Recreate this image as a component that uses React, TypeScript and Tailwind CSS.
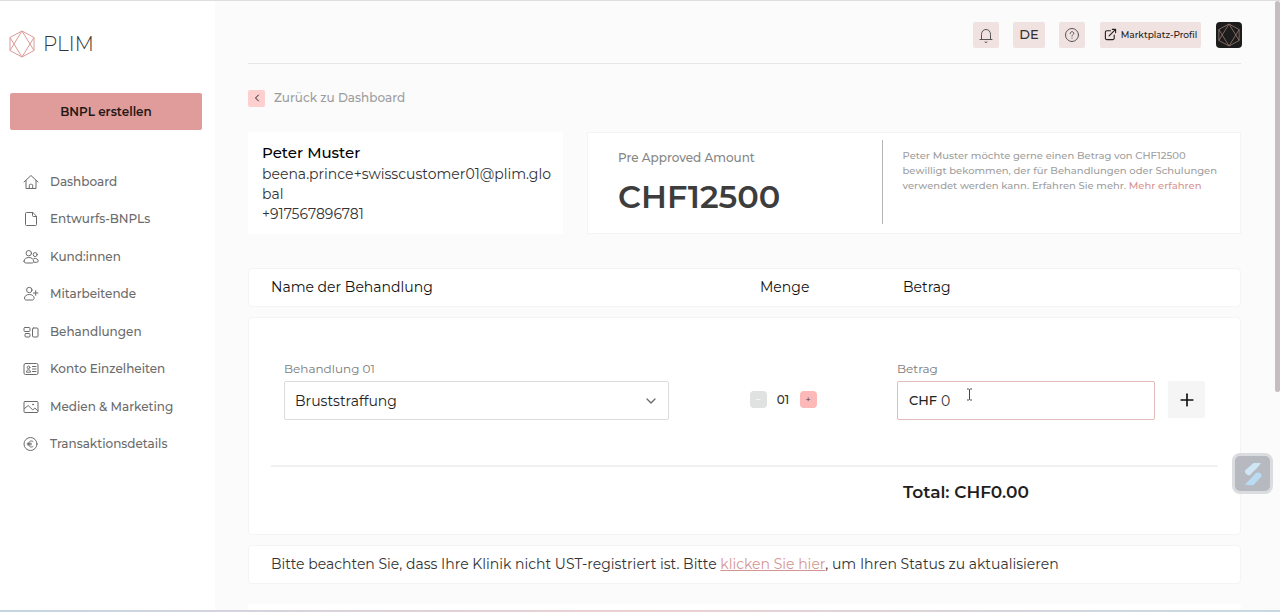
import { useState } from 'react';
import type { ReactNode } from 'react';
import { ChevronDown, ChevronLeft, Plus } from 'lucide-react';

const navItems: { label: string; icon: ReactNode }[] = [
  {
    label: 'Dashboard',
    icon: (
      <>
        <path d="M1 8 8 1.5 15 8" />
        <path d="M3 6.5v8h10v-8" />
        <path d="M6.3 14.5v-3.2c0-.6.4-1 1-1h1.4c.6 0 1 .4 1 1v3.2" />
      </>
    )
  },
  {
    label: 'Entwurfs-BNPLs',
    icon: (
      <>
        <path d="M9.5 1.5h-6a1 1 0 0 0-1 1v11a1 1 0 0 0 1 1h9a1 1 0 0 0 1-1v-8z" />
        <path d="M9.5 1.5v3a1 1 0 0 0 1 1h3" />
      </>
    )
  },
  {
    label: 'Kund:innen',
    icon: (
      <>
        <circle cx="5.8" cy="4.2" r="2.7" />
        <path d="M1 12.3c0-2.4 2-3.8 4.8-3.8s4.8 1.4 4.8 3.8c0 1-.7 1.7-1.7 1.7H2.7C1.7 14 1 13.3 1 12.3z" />
        <circle cx="12.2" cy="5.6" r="2" />
        <path d="M11 9.4c2.5-.2 4.2.9 4.2 2.5 0 .8-.6 1.4-1.4 1.4h-2.6" />
      </>
    )
  },
  {
    label: 'Mitarbeitende',
    icon: (
      <>
        <circle cx="6.3" cy="4" r="2.7" />
        <path d="M1.5 12.3c0-2.4 2-3.8 4.8-3.8s4.8 1.4 4.8 3.8c0 1-.7 1.7-1.7 1.7H3.2c-1 0-1.7-.7-1.7-1.7z" />
        <path d="M12.7 4.7v4.6M10.4 7H15" />
      </>
    )
  },
  {
    label: 'Behandlungen',
    icon: (
      <>
        <rect x="1" y="3.5" width="6" height="4" rx="1" />
        <rect x="2" y="9.5" width="5" height="3.5" rx="1" />
        <rect x="9.5" y="4" width="5.5" height="9" rx="1" />
      </>
    )
  },
  {
    label: 'Konto Einzelheiten',
    icon: (
      <>
        <rect x="1" y="2.5" width="14" height="11" rx="1.5" />
        <circle cx="5.5" cy="6.4" r="1.3" />
        <path d="M3.5 10.8c0-1.3.8-2 2-2s2 .7 2 2z" />
        <path d="M9.5 5.5H13M9.5 8H13M9.5 10.5H13" />
      </>
    )
  },
  {
    label: 'Medien & Marketing',
    icon: (
      <>
        <rect x="1" y="2.5" width="14" height="11" rx="1" />
        <path d="m1.5 9.5 3.7-3 4.6 4.5 2-2 3 2.7" />
        <circle cx="10" cy="5.5" r=".5" />
      </>
    )
  },
  {
    label: 'Transaktionsdetails',
    icon: (
      <>
        <circle cx="7.5" cy="8" r="6.5" />
        <path d="M10 5.5C8 4 5.7 5.3 5.7 8s2.3 4 4.3 2.5M4.3 7.3h4M4.3 8.8h4" />
      </>
    )
  }
];

function Hexagon({ className }: { className: string }) {
  return (
    <svg viewBox="0 0 26 28" fill="none" stroke="currentColor" strokeLinejoin="round" className={className} aria-hidden="true">
      <path d="M13 1 25 7.5v13L13 27 1 20.5v-13z" />
      <path d="M13 1 1 20.5M13 1l12 19.5M13 27 1 7.5M13 27 25 7.5" />
    </svg>
  );
}

function Sidebar() {
  return (
    <aside className="w-[215px] shrink-0 bg-white">
      <a href="#" className="flex items-center gap-2 pl-[9px] mt-[29px]">
        <Hexagon className="w-[26px] h-[28px] text-[#dc9a98]" />
        <span className="text-xl font-light leading-7 text-[#333]">PLIM</span>
      </a>
      <div className="pl-[10px] pr-[13px] mt-[35px]">
        <button className="w-full h-[37px] rounded-xs bg-[#e09c9b] text-xs font-semibold text-[#231815]">
          BNPL erstellen
        </button>
      </div>
      <nav className="grid auto-rows-fr h-75 mt-[33px]">
        {navItems.map((item) => (
          <a key={item.label} href="#" className="flex items-center gap-[11px] pl-[23px] text-xs font-medium text-[#6b6b6b]">
            <svg viewBox="0 0 16 16" fill="none" stroke="currentColor" strokeLinecap="round" strokeLinejoin="round" className="size-4" aria-hidden="true">
              {item.icon}
            </svg>
            {item.label}
          </a>
        ))}
      </nav>
    </aside>
  );
}

function Header() {
  return (
    <header className="flex items-center justify-end h-[63px] pt-[5px] border-b border-[#e6e6e6] text-[#333]">
      <button aria-label="Benachrichtigungen" className="flex items-center justify-center size-[26px] rounded-xs bg-[#f0e2e1] text-[#555]">
        <svg viewBox="0 0 16 16" fill="none" stroke="currentColor" strokeLinecap="round" strokeLinejoin="round" className="size-4" aria-hidden="true">
          <path d="M2 12.5h12M3.5 12.5v-5C3.5 4.500 5.3 2.5 8 2.5s4.500 2 4.500 5v5M7 15l1 .5 1-.5" />
        </svg>
      </button>
      <button className="w-8 h-[26px] ml-[14px] rounded-xs bg-[#f0e2e1] text-[13px] font-medium">DE</button>
      <button aria-label="Hilfe" className="flex items-center justify-center size-[26px] ml-[14px] rounded-xs bg-[#f0e2e1] text-[#555]">
        <svg viewBox="0 0 16 16" fill="none" stroke="currentColor" strokeLinecap="round" className="size-4" aria-hidden="true">
          <circle cx="8" cy="8" r="6.5" />
          <path d="M6.2 6.5c0-1 .8-1.8 1.8-1.8s1.8.7 1.8 1.6c0 1.2-1.8 1.3-1.8 2.7M8 11v.2" />
        </svg>
      </button>
      <a href="#" className="flex items-center justify-center gap-1 h-[26px] w-[101px] ml-[15px] rounded-xs bg-[#f0e2e1] text-[9px] font-medium text-[#222]">
        <svg viewBox="0 0 14 14" fill="none" stroke="currentColor" strokeWidth="1.2" strokeLinecap="round" strokeLinejoin="round" className="size-[13px]" aria-hidden="true">
          <path d="M7 3H3a1.5 1.5 0 0 0-1.5 1.5V11A1.5 1.5 0 0 0 3 12.5h6.5A1.5 1.5 0 0 0 11 11V7.5M5.5 8.5l7-7M9 1.5h3.5V5" />
        </svg>
        Marktplatz-Profil
      </a>
      <button aria-label="Profil" className="flex items-center justify-center size-[26px] ml-[15px] -mr-px rounded-sm bg-[#1c1c1c]">
        <Hexagon className="w-[22px] h-6 text-[#92756d]" />
      </button>
    </header>
  );
}

function CustomerCards() {
  return (
    <div className="grid grid-cols-[315fr_654fr] gap-6 mt-6">
      <div className="h-[102px] pl-[14px] pr-2 pt-[9px] bg-white text-[#333]">
        <h2 className="text-[15px] leading-[23px] font-medium text-black">Peter Muster</h2>
        <p className="text-sm break-all">beena.prince+swisscustomer01@plim.global</p>
        <p className="text-sm">+917567896781</p>
      </div>
      <div className="grid grid-cols-[295fr_358fr] h-[102px] pt-[7px] pb-[9px] bg-white border border-[#f4f4f4]">
        <div className="pl-[30px] pt-2 border-r border-[#b5b5b5]">
          <p className="text-xs leading-5 font-medium text-[#858585]">Pre Approved Amount</p>
          <p className="mt-[9px] text-[32px] leading-10 font-semibold text-[#3d3d3d]">CHF12500</p>
        </div>
        <p className="pl-5 pr-4 pt-2 text-[10px] leading-[15px] font-medium text-[#a0a0a0]">
          Peter Muster möchte gerne einen Betrag von CHF12500 bewilligt bekommen, der für Behandlungen oder Schulungen
          verwendet werden kann. Erfahren Sie mehr.{' '}
          <a href="#" className="text-[#d59593]">Mehr erfahren</a>
        </p>
      </div>
    </div>
  );
}

function TreatmentForm() {
  const [menge, setMenge] = useState(1);
  const [betrag, setBetrag] = useState('0');

  return (
    <>
      <div className="grid grid-cols-[489fr_143fr_315fr] items-center h-[39px] mt-[34px] px-[22px] pb-px bg-white border border-[#f4f4f4] rounded-sm text-sm text-[#111]">
        <span>Name der Behandlung</span>
        <span>Menge</span>
        <span>Betrag</span>
      </div>

      <div className="mt-[10px] bg-white border border-[#f4f4f4] rounded-sm">
        <div className="grid grid-cols-[385fr_228fr_258fr_50fr] items-end px-[35px] pt-[41px] pb-[45px]">
          <div>
            <label htmlFor="behandlung" className="block mb-[2px] text-xs leading-5 text-[#7a7a7a]">Behandlung 01</label>
            <div className="relative">
              <select id="behandlung" className="block w-full h-[39px] pl-[10px] pr-8 appearance-none bg-white border border-[#dcdcdc] rounded-xs text-sm text-[#222]">
                <option>Bruststraffung</option>
              </select>
              <ChevronDown className="absolute right-[10px] top-3 size-4 text-[#6b6b6b] pointer-events-none" />
            </div>
          </div>

          <div className="flex items-center justify-center h-[39px] pb-[2px] text-[#333]">
            <button
              aria-label="Menge verringern"
              onClick={() => setMenge(Math.max(1, menge - 1))}
              className="flex items-center justify-center size-[17px] rounded-sm bg-[#e0e1e1] text-[10px] leading-none text-white"
            >
              −
            </button>
            <span className="w-[33px] text-center text-xs font-medium">{String(menge).padStart(2, '0')}</span>
            <button
              aria-label="Menge erhöhen"
              onClick={() => setMenge(menge + 1)}
              className="flex items-center justify-center size-[17px] rounded-sm bg-[#fdb8b8] text-[10px] leading-none text-[#5a3a3a]"
            >
              +
            </button>
          </div>

          <div>
            <label htmlFor="betrag" className="block mb-[2px] text-xs leading-5 text-[#7a7a7a]">Betrag</label>
            <div className="relative flex items-center gap-1 h-[39px] px-[11px] border border-[#e0bcbb] rounded-xs text-[#333]">
              <span className="text-[13px] font-medium text-[#222]">CHF</span>
              <input
                id="betrag"
                value={betrag}
                onChange={(e) => setBetrag(e.target.value)}
                className="flex-1 min-w-0 text-sm outline-none"
              />
              {/* text cursor */}
              <svg viewBox="0 0 7 13" fill="none" stroke="#444" className="absolute left-[68px] top-[6px] w-[7px] h-[13px]" aria-hidden="true">
                <path d="M1 1h1.5l1 .7 1-.7H6M1 12h1.5l1-.7 1 .7H6M3.5 1.5v10" />
              </svg>
            </div>
          </div>

          <div className="flex justify-end pb-[2px]">
            <button aria-label="Behandlung hinzufügen" className="flex items-center justify-center size-[37px] rounded-xs bg-[#f5f5f5] text-[#111]">
              <Plus className="size-5" />
            </button>
          </div>
        </div>

        <div className="mx-[22px] pt-[13px] pb-[30px] border-t-2 border-[#f1f1f1]">
          <div className="grid grid-cols-[632fr_315fr]">
            <p className="col-start-2 text-[17px] leading-6 font-semibold text-[#1f1f1f]">Total: CHF0.00</p>
          </div>
        </div>
      </div>

      <p className="mt-[10px] px-[22px] pt-2 pb-[9px] bg-white border border-[#f4f4f4] rounded-sm text-sm text-[#333]">
        Bitte beachten Sie, dass Ihre Klinik nicht UST-registriert ist. Bitte{' '}
        <a href="#" className="text-[#d59593] underline">klicken Sie hier</a>, um Ihren Status zu aktualisieren
      </p>
      <div className="h-10 mt-5 bg-white" />
    </>
  );
}

export default function App() {
  return (
    <div className="relative flex flex-col h-screen overflow-hidden border-t border-[#dedede] bg-[#fbfbfb] font-['Montserrat','Inter',sans-serif]">
      <div className="flex flex-1 min-h-0">
        <Sidebar />
        <main className="flex-1 min-w-0 overflow-hidden pl-[33px] pr-[34px]">
          <Header />
          <a href="#" className="flex items-center gap-[9px] w-fit mt-6 text-xs leading-5 font-medium text-[#9d9d9d]">
            <span className="flex items-center justify-center size-[17px] rounded-xs bg-[#fdcfce] text-[#222]">
              <ChevronLeft className="size-3" />
            </span>
            Zurück zu Dashboard
          </a>
          <CustomerCards />
          <TreatmentForm />
        </main>
        <div className="w-[5px] h-[391px] rounded-full bg-[#c6bdc1]" />
      </div>
      <div className="h-[2px] bg-linear-to-r from-[#c5d5e3] via-[#ecd0d2] to-[#c5d9e3]" />

      <button aria-label="Assistent" className="absolute right-[7px] bottom-[118px] flex items-center justify-center size-[41px] rounded-lg border-3 border-[#dadcdf] bg-[#b7b9c1]">
        <svg viewBox="0 0 20 26" className="w-5 h-[26px]" aria-hidden="true">
          <path d="M10.5 2h7.5l-3 4-8.5 8.5C3.5 14 1.5 12 2 9.5z" fill="#cfe6f5" />
          <path d="M2 23.5 13 12c3-1.5 6 .5 5.5 3.5L10 24.5z" fill="#b9dcf3" />
        </svg>
      </button>
    </div>
  );
}
